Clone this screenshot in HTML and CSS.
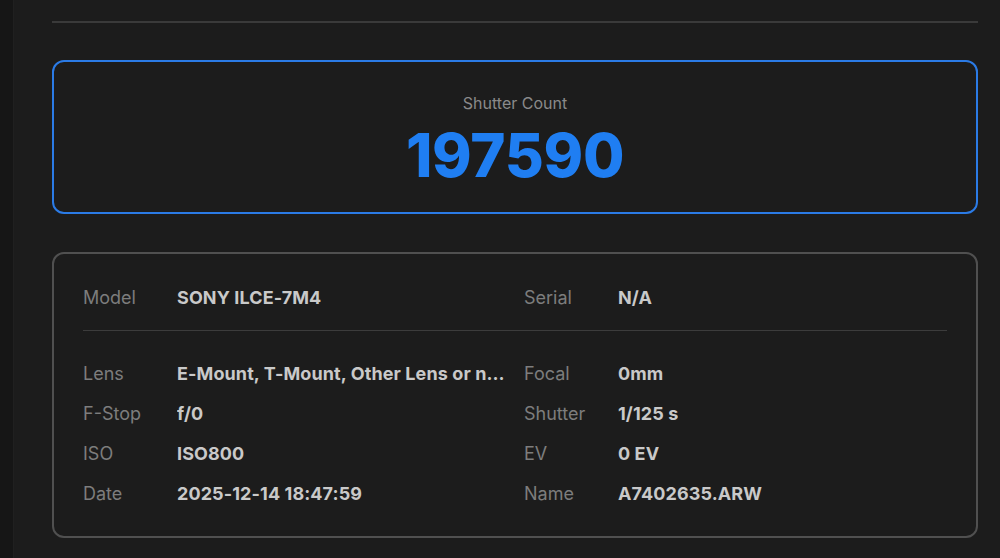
FILE: index.html
```html
<!DOCTYPE html>
<html>
<head>
<meta charset="utf-8">
<link rel="stylesheet" href="styles.css">
</head>
<body>
<div class="layout">
  <div class="sidebar"></div>
  <main class="main">
    <hr class="rule">
    <section class="count-card">
      <div class="count-label">Shutter Count</div>
      <div class="count-value">197590</div>
    </section>
    <section class="info-card">
      <div class="grid">
        <div class="item"><span class="k">Model</span><span class="v">SONY ILCE-7M4</span></div>
        <div class="item"><span class="k">Serial</span><span class="v">N/A</span></div>
      </div>
      <div class="divider"></div>
      <div class="grid rows">
        <div class="item"><span class="k">Lens</span><span class="v">E-Mount, T-Mount, Other Lens or no lens</span></div>
        <div class="item"><span class="k">Focal</span><span class="v">0mm</span></div>
        <div class="item"><span class="k">F-Stop</span><span class="v">f/0</span></div>
        <div class="item"><span class="k">Shutter</span><span class="v">1/125 s</span></div>
        <div class="item"><span class="k">ISO</span><span class="v">ISO800</span></div>
        <div class="item"><span class="k">EV</span><span class="v">0 EV</span></div>
        <div class="item"><span class="k">Date</span><span class="v">2025-12-14 18:47:59</span></div>
        <div class="item"><span class="k">Name</span><span class="v">A7402635.ARW</span></div>
      </div>
    </section>
  </main>
</div>
</body>
</html>
```
FILE: styles.css
```css
html, body {
  margin: 0;
  padding: 0;
  background: #1c1c1c;
  font-family: Inter, "Noto Sans", sans-serif;
  height: 100%;
  overflow: hidden;
}
.layout {
  display: flex;
  height: 558px;
}
.sidebar {
  width: 13px;
  flex: none;
  background: #161616;
  border-right: 1px solid #202020;
}
.main {
  flex: 1;
  padding: 21px 22px 0 38px;
}
.rule {
  margin: 0;
  border: 0;
  height: 2px;
  background: #3a3a3a;
}
.count-card {
  margin-top: 37px;
  border: 2px solid #2b7be6;
  border-radius: 12px;
  box-sizing: border-box;
  height: 154px;
  display: flex;
  flex-direction: column;
  align-items: center;
  padding-top: 32px;
}
.count-label {
  font-size: 16px;
  color: #8a8a8a;
  line-height: 18px;
}
.count-value {
  margin-top: 11px;
  font-size: 60px;
  font-weight: 800;
  color: #1f7ef2;
  line-height: 64px;
  letter-spacing: -0.3px;
}
.info-card {
  margin-top: 38px;
  border: 2px solid #505050;
  border-radius: 12px;
  box-sizing: border-box;
  height: 286px;
  padding: 31px 29px 0 29px;
}
.grid {
  display: grid;
  grid-template-columns: 423px 423px;
  column-gap: 18px;
}
.grid.rows {
  row-gap: 16px;
}
.item {
  display: flex;
  align-items: center;
  height: 24px;
  font-size: 18px;
  min-width: 0;
}
.k {
  width: 94px;
  flex: none;
  color: #7d7d7d;
}
.v {
  color: #c9c9c9;
  font-weight: 700;
  white-space: nowrap;
  overflow: hidden;
  text-overflow: ellipsis;
  min-width: 0;
  letter-spacing: 0.1px;
}
.divider {
  height: 1px;
  background: #3c3c3c;
  margin: 21px 0 30px;
}
```
